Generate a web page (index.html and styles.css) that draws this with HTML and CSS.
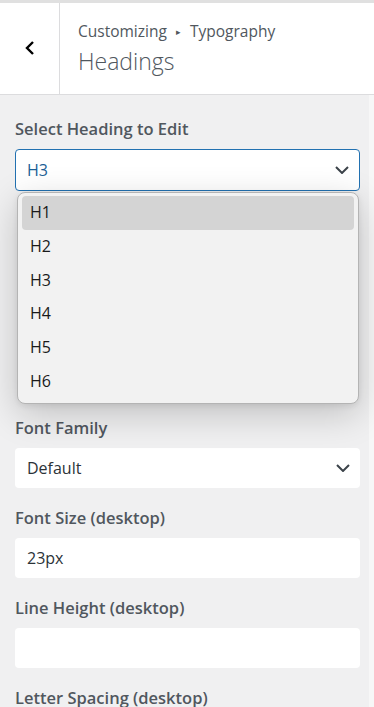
FILE: index.html
```html
<!DOCTYPE html>
<html lang="en">
<head>
  <meta charset="UTF-8">
  <meta name="viewport" content="width=device-width, initial-scale=1.0">
  <title>Customizing - Headings</title>
  <link rel="stylesheet" href="styles.css">
</head>
<body>
  <div id="screen">
    <div id="panel-head">
      <button class="back" aria-label="Back">
        <svg width="12" height="16" viewBox="0 0 12 16"><path d="M9 2 L3 8 L9 14" fill="none" stroke="#000" stroke-width="2.4"/></svg>
      </button>
      <div class="titles">
        <div class="crumbs">Customizing <span class="sep">&#9656;</span> Typography</div>
        <h1>Headings</h1>
      </div>
    </div>

    <div id="panel-body">
      <div id="controls">
        <div class="field field-picker">
          <label>Select Heading to Edit</label>
          <div class="select-wrap">
            <div class="select focused">
              <span>H3</span>
              <svg class="chev" width="14" height="8" viewBox="0 0 14 8"><path d="M1 1 L7 7 L13 1" fill="none" stroke="#3c434a" stroke-width="2"/></svg>
            </div>
            <ul class="dropdown">
              <li class="hover">H1</li>
              <li>H2</li>
              <li>H3</li>
              <li>H4</li>
              <li>H5</li>
              <li>H6</li>
            </ul>
          </div>
        </div>

        <div class="field">
          <label>Font Family</label>
          <div class="select">
            <span>Default</span>
            <svg class="chev" width="14" height="8" viewBox="0 0 14 8"><path d="M1 1 L7 7 L13 1" fill="none" stroke="#3c434a" stroke-width="2"/></svg>
          </div>
        </div>

        <div class="field">
          <label>Font Size (desktop)</label>
          <div class="input">23px</div>
        </div>

        <div class="field">
          <label>Line Height (desktop)</label>
          <div class="input"></div>
        </div>

        <div class="field">
          <label>Letter Spacing (desktop)</label>
          <div class="input"></div>
        </div>
      </div>
      <div id="scroll-track"></div>
    </div>
  </div>
</body>
</html>
```

FILE: styles.css
```css
body {
  margin: 0;
  font-family: "Open Sans", "Noto Sans", sans-serif;
  background: #f0f0f1;
  height: 707px;
  overflow: hidden;
}

#screen {
  border-top: 3px solid #e0e0e0;
  display: flex;
  flex-direction: column;
  height: 704px;
}

#panel-head {
  flex-shrink: 0;
  display: flex;
  height: 91px;
  background: #fff;
  border-bottom: 1px solid #dcdcde;
}

.back {
  width: 60px;
  border: none;
  border-right: 1px solid #dcdcde;
  background: #fff;
  padding: 0 0 2px 0;
  display: flex;
  align-items: center;
  justify-content: center;
}

.titles {
  padding: 18px 0 0 18px;
  color: #50575e;
}

.crumbs {
  font-size: 15.5px;
  line-height: 21px;
}

.crumbs .sep {
  font-size: 9px;
  vertical-align: 2px;
  margin: 0 5px;
}

.titles h1 {
  margin: 4px 0 0 0;
  font-size: 23px;
  font-weight: 300;
  line-height: 30px;
}

#panel-body {
  flex: 1;
  display: flex;
  overflow: hidden;
}

#controls {
  flex: 1;
  padding: 22px 9px 0 15px;
}

#scroll-track {
  width: 5px;
  background: #f7f7f7;
}

.field {
  margin-bottom: 18px;
}

.field-picker {
  margin-bottom: 225px;
}

.field label {
  display: block;
  font-size: 16.5px;
  font-weight: 600;
  line-height: 24px;
  color: #50575e;
  margin-bottom: 8px;
}

.select,
.input {
  box-sizing: border-box;
  height: 40px;
  background: #fff;
  border-radius: 4px;
  padding: 0 10px 0 12px;
  display: flex;
  align-items: center;
  justify-content: space-between;
  font-size: 16px;
  color: #2c3338;
}

.select.focused {
  height: 42px;
  border: 1px solid #2271b1;
  padding-left: 11px;
  color: #1d5f96;
}

.select-wrap {
  position: relative;
}

.dropdown {
  position: absolute;
  top: calc(100% + 1px);
  left: 2px;
  right: 1px;
  margin: 0;
  padding: 3px 4px 4px;
  list-style: none;
  background: #f2f2f2;
  border: 1px solid #b4b4b4;
  border-radius: 8px;
  box-shadow: 0 10px 36px rgba(0, 0, 0, 0.2), 0 2px 6px rgba(0, 0, 0, 0.08);
  z-index: 10;
}

.dropdown li {
  height: 33.8px;
  line-height: 33.8px;
  padding-left: 8px;
  font-size: 16px;
  color: #1a1a1a;
  border-radius: 4px;
}

.dropdown li.hover {
  background: #d4d4d4;
}
```
